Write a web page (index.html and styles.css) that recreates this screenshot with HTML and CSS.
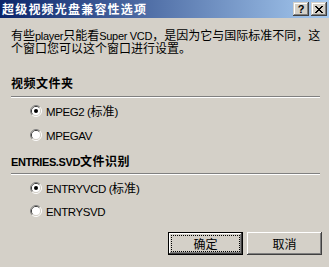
FILE: index.html
```html
<!DOCTYPE html>
<html lang="zh-CN">
<head>
<meta charset="utf-8">
<title>超级视频光盘兼容性选项</title>
<link rel="stylesheet" href="styles.css">
</head>
<body>
<div class="window">
  <div class="titlebar">
    <span class="title">超级视频光盘兼容性选项</span>
    <div class="caption-btns">
      <div class="cap-btn"><span class="q">?</span></div>
      <div class="cap-btn">
        <svg width="8" height="7" viewBox="0 0 8 7" shape-rendering="crispEdges">
          <path d="M0 0h2v1h-2z M6 0h2v1h-2z M1 1h2v1h-2z M5 1h2v1h-2z M2 2h4v1h-4z M3 3h2v1h-2z M2 4h4v1h-4z M1 5h2v1h-2z M5 5h2v1h-2z M0 6h2v1h-2z M6 6h2v1h-2z" fill="#000"/>
        </svg>
      </div>
    </div>
  </div>
  <div class="content">
    <div class="desc">
      <div class="desc-line">有些<span class="lat">player</span>只能看<span class="lat">Super VCD</span>，是因为它与国际标准不同，这</div>
      <div class="desc-line">个窗口您可以这个窗口进行设置。</div>
    </div>

    <div class="group-title g1">视频文件夹</div>
    <div class="sep s1"></div>
    <label class="radio r1">
      <svg class="rb" width="12" height="12" viewBox="0 0 12 12"><path d="M2.11 9.89A5.5 5.5 0 0 1 9.89 2.11" stroke="#808080" fill="none"/><path d="M9.89 2.11A5.5 5.5 0 0 1 2.11 9.89" stroke="#fff" fill="none"/><path d="M2.82 9.18A4.5 4.5 0 0 1 9.18 2.82" stroke="#404040" fill="none"/><path d="M9.18 2.82A4.5 4.5 0 0 1 2.82 9.18" stroke="#d4d0c8" fill="none"/><circle cx="6" cy="6" r="4" fill="#fff"/><circle cx="6" cy="6" r="2" fill="#000"/></svg>
      <span class="lbl"><span class="lat">MPEG2 (</span>标准<span class="lat">)</span></span>
    </label>
    <label class="radio r2">
      <svg class="rb" width="12" height="12" viewBox="0 0 12 12"><path d="M2.11 9.89A5.5 5.5 0 0 1 9.89 2.11" stroke="#808080" fill="none"/><path d="M9.89 2.11A5.5 5.5 0 0 1 2.11 9.89" stroke="#fff" fill="none"/><path d="M2.82 9.18A4.5 4.5 0 0 1 9.18 2.82" stroke="#404040" fill="none"/><path d="M9.18 2.82A4.5 4.5 0 0 1 2.82 9.18" stroke="#d4d0c8" fill="none"/><circle cx="6" cy="6" r="4" fill="#fff"/></svg>
      <span class="lbl"><span class="lat">MPEGAV</span></span>
    </label>

    <div class="group-title g2"><span class="lat">ENTRIES.SVD</span>文件识别</div>
    <div class="sep s2"></div>
    <label class="radio r3">
      <svg class="rb" width="12" height="12" viewBox="0 0 12 12"><path d="M2.11 9.89A5.5 5.5 0 0 1 9.89 2.11" stroke="#808080" fill="none"/><path d="M9.89 2.11A5.5 5.5 0 0 1 2.11 9.89" stroke="#fff" fill="none"/><path d="M2.82 9.18A4.5 4.5 0 0 1 9.18 2.82" stroke="#404040" fill="none"/><path d="M9.18 2.82A4.5 4.5 0 0 1 2.82 9.18" stroke="#d4d0c8" fill="none"/><circle cx="6" cy="6" r="4" fill="#fff"/><circle cx="6" cy="6" r="2" fill="#000"/></svg>
      <span class="lbl"><span class="lat">ENTRYVCD (</span>标准<span class="lat">)</span></span>
    </label>
    <label class="radio r4">
      <svg class="rb" width="12" height="12" viewBox="0 0 12 12"><path d="M2.11 9.89A5.5 5.5 0 0 1 9.89 2.11" stroke="#808080" fill="none"/><path d="M9.89 2.11A5.5 5.5 0 0 1 2.11 9.89" stroke="#fff" fill="none"/><path d="M2.82 9.18A4.5 4.5 0 0 1 9.18 2.82" stroke="#404040" fill="none"/><path d="M9.18 2.82A4.5 4.5 0 0 1 2.82 9.18" stroke="#d4d0c8" fill="none"/><circle cx="6" cy="6" r="4" fill="#fff"/></svg>
      <span class="lbl"><span class="lat">ENTRYSVD</span></span>
    </label>

    <div class="buttons">
      <button class="btn default"><span class="btn-in">确定</span></button>
      <button class="btn"><span class="btn-in">取消</span></button>
    </div>
  </div>
</div>
</body>
</html>
```

FILE: styles.css
```css
html, body {
  margin: 0;
  padding: 0;
}
body {
  width: 329px;
  height: 267px;
  overflow: hidden;
  background: #d4d0c8;
  font-family: "Liberation Sans", "Noto Sans CJK SC", sans-serif;
  font-size: 12px;
  color: #000;
}
.window {
  display: flex;
  flex-direction: column;
  height: 267px;
}
.titlebar {
  height: 18px;
  display: flex;
  align-items: center;
  background: linear-gradient(to right, #0a246a, #a6caf0);
  padding-left: 2px;
}
.title {
  flex: 1;
  color: #fff;
  font-family: "Noto Sans CJK SC", sans-serif;
  font-weight: bold;
  font-size: 12px;
  letter-spacing: 1.2px;
  line-height: 18px;
  white-space: nowrap;
}
.caption-btns {
  display: flex;
  gap: 2px;
  padding-right: 2px;
}
.cap-btn {
  width: 16px;
  height: 14px;
  box-sizing: border-box;
  background: #d4d0c8;
  box-shadow: inset -1px -1px #404040, inset 1px 1px #d4d0c8, inset -2px -2px #808080, inset 2px 2px #fff;
  display: flex;
  align-items: center;
  justify-content: center;
}
.q {
  font-family: "Liberation Sans", sans-serif;
  font-weight: bold;
  font-size: 11px;
  line-height: 11px;
}
.content {
  display: flex;
  flex-direction: column;
  padding: 0 9px 0 11px;
}
.lat {
  font-family: "Liberation Sans", sans-serif;
  font-size: 11px;
  letter-spacing: -0.3px;
}
.desc {
  margin-top: 10px;
  display: flex;
  flex-direction: column;
  font-family: "Noto Sans CJK SC", sans-serif;
}
.desc-line {
  height: 13px;
  line-height: 13px;
  white-space: nowrap;
}
.group-title {
  font-family: "Noto Sans CJK SC", sans-serif;
  font-weight: bold;
  line-height: 14px;
  letter-spacing: 0.5px;
  white-space: nowrap;
}
.group-title .lat {
  letter-spacing: -0.4px;
  font-weight: bold;
}
.g1 { margin-top: 22px; }
.g2 { margin-top: 13px; }
.sep {
  height: 0;
  border-top: 1px solid #808080;
  border-bottom: 1px solid #fff;
}
.s1 { margin-top: 6px; }
.s2 { margin-top: 4px; }
.radio {
  display: flex;
  align-items: center;
  gap: 4px;
  height: 12px;
  padding-left: 19px;
  white-space: nowrap;
}
.rb { flex: none; display: block; }
.lbl {
  font-family: "Noto Sans CJK SC", sans-serif;
  line-height: 12px;
}
.lbl .lat {
  font-size: 11.5px;
  letter-spacing: -0.4px;
}
.r1 { margin-top: 7px; }
.r2 { margin-top: 12px; }
.r3 { margin-top: 7px; }
.r4 { margin-top: 11px; }
.buttons {
  margin-top: 15px;
  display: flex;
  justify-content: flex-end;
  gap: 4px;
  margin-right: -2px;
}
.btn {
  width: 75px;
  height: 23px;
  box-sizing: border-box;
  margin: 0;
  padding: 3px;
  border: none;
  background: #d4d0c8;
  box-shadow: inset -1px -1px #404040, inset 1px 1px #fff, inset -2px -2px #808080, inset 2px 2px #d4d0c8;
  display: flex;
  font-family: "Noto Sans CJK SC", sans-serif;
  font-size: 12px;
  color: #000;
}
.btn.default {
  border: 1px solid #000;
  padding: 2px;
}
.btn-in {
  flex: 1;
  display: flex;
  align-items: center;
  justify-content: center;
  border: 1px dotted transparent;
  line-height: 13px;
}
.btn.default .btn-in {
  border-color: #000;
}
```
